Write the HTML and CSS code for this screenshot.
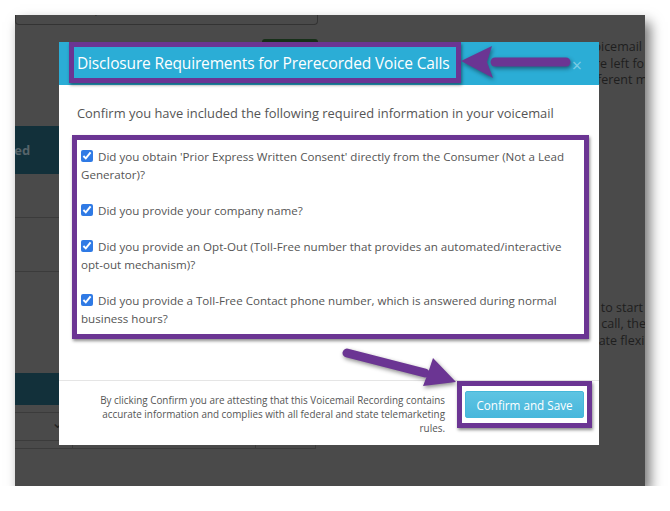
FILE: index.html
```html
<!DOCTYPE html>
<html lang="en">
<head>
<meta charset="utf-8">
<title>Disclosure Requirements</title>
<link rel="stylesheet" href="styles.css">
</head>
<body>
<div class="frame">
  <div class="page">
    <div class="left-col">
      <div class="top-input">Voicemail Drop</div>
      <div class="green-btn"></div>
      <div class="teal-bar"><span class="teal-text">Used</span></div>
      <div class="row row-a"></div>
      <div class="row row-b"></div>
      <div class="teal-bar teal-bar-2"></div>
      <div class="select-row"><span class="chev">&#8964;</span></div>
      <div class="grid-row"><span class="cell c1"></span><span class="cell c2"></span><span class="cell c3"></span></div>
    </div>
    <div class="right-col">
      <div class="para para-top">
        <span class="ln l1">Voicemail</span>
        <span class="ln l2">are left for</span>
        <span class="ln l3">different messages</span>
      </div>
      <div class="para para-bottom">
        <span class="ln l4">it to start</span>
        <span class="ln l5">a call, then</span>
        <span class="ln l6">date flexible</span>
      </div>
    </div>
  </div>

  <div class="modal">
    <div class="modal-header">
      <div class="title-box"><h4 class="modal-title">Disclosure Requirements for Prerecorded Voice Calls</h4></div>
      <span class="close">&times;</span>
    </div>
    <div class="modal-body">
      <p class="intro">Confirm you have included the following required information in your voicemail</p>
      <div class="checklist">
        <label class="item"><input type="checkbox" checked> Did you obtain 'Prior Express Written Consent' directly from the Consumer (Not a Lead Generator)?</label>
        <label class="item"><input type="checkbox" checked> Did you provide your company name?</label>
        <label class="item"><input type="checkbox" checked> Did you provide an Opt-Out (Toll-Free number that provides an automated/interactive opt-out mechanism)?</label>
        <label class="item"><input type="checkbox" checked> Did you provide a Toll-Free Contact phone number, which is answered during normal business hours?</label>
      </div>
    </div>
    <div class="modal-footer">
      <p class="attest">By clicking Confirm you are attesting that this Voicemail Recording contains accurate information and complies with all federal and state telemarketing rules.</p>
      <div class="btn-box"><button class="btn-confirm" type="button">Confirm and Save</button></div>
    </div>
  </div>

  <svg class="arrows" width="630" height="471" viewBox="0 0 630 471">
    <g class="arrow">
      <line x1="551" y1="47" x2="480" y2="47" stroke="#6b3593" stroke-width="9" stroke-linecap="round"/>
      <path d="M446 46 L477 31 L472 47 L478 63 Z" fill="#6b3593"/>
    </g>
    <g class="arrow">
      <line x1="332" y1="338" x2="410" y2="358" stroke="#6b3593" stroke-width="9" stroke-linecap="round"/>
      <path d="M441 367 L418 343 L413 358 L408 371 Z" fill="#6b3593"/>
    </g>
  </svg>
</div>
</body>
</html>
```

FILE: styles.css
```css
* { box-sizing: border-box; }

body {
  margin: 0;
  background: #ffffff;
  font-family: "Open Sans", "Liberation Sans", sans-serif;
}

.frame {
  position: relative;
  margin: 15px 0 0 15px;
  width: 630px;
  height: 471px;
  background: #4a4a4a;
  overflow: hidden;
  box-shadow: 5px 7px 12px rgba(0, 0, 0, 0.55);
}

/* dimmed page behind the dialog */
.page {
  display: grid;
  grid-template-columns: 303px 1fr 50px;
  height: 100%;
}

.left-col {
  grid-column: 1;
  display: flex;
  flex-direction: column;
}

.top-input {
  margin-top: -21px;
  height: 31px;
  border: 1px solid #333;
  border-top: none;
  border-radius: 0 0 4px 4px;
  color: #2a2a2a;
  font-size: 13px;
  line-height: 28px;
  text-indent: -6px;
  overflow: hidden;
  white-space: nowrap;
}

.green-btn {
  align-self: flex-end;
  margin-top: 14px;
  width: 56px;
  height: 30px;
  background: #173019;
  border-radius: 3px 3px 0 0;
}

.teal-bar {
  margin-top: 57px;
  height: 48px;
  background: #12303a;
  display: flex;
  align-items: center;
  overflow: hidden;
}

.teal-text {
  margin-left: -17px;
  color: #56646a;
  font-weight: 700;
  font-size: 13px;
}

.row {
  border-bottom: 1px solid #3b3b3b;
}
.row-a { height: 44px; }
.row-b { height: 54px; }

.teal-bar-2 {
  margin-top: 101px;
  height: 32px;
}

.select-row {
  margin-top: 7px;
  height: 29px;
  border-top: 1px solid #3b3b3b;
  border-bottom: 1px solid #3b3b3b;
  position: relative;
}
.chev {
  position: absolute;
  left: 36px;
  top: -2px;
  color: #222;
  font-size: 16px;
}

.grid-row {
  display: flex;
  height: 8px;
}
.cell { border-right: 1px solid #3b3b3b; border-bottom: 1px solid #3b3b3b; }
.c1 { width: 58px; }
.c2 { width: 183px; }
.c3 { width: 60px; }

.right-col {
  grid-column: 3;
  overflow: hidden;
  color: #1e1e1e;
  font-size: 12.5px;
  line-height: 16.5px;
}

.para { display: flex; flex-direction: column; white-space: nowrap; }
.para-top { margin-top: 24px; }
.para-bottom { margin-top: 211px; }
.ln { display: block; }
.l1 { margin-left: -9px; }
.l2 { margin-left: -7px; }
.l3 { margin-left: -13px; }
.l4 { margin-left: -5px; }
.l5 { margin-left: -4px; }
.l6 { margin-left: -4px; }

/* dialog */
.modal {
  position: absolute;
  left: 44px;
  top: 27px;
  width: 540px;
  height: 403px;
  background: #ffffff;
  display: flex;
  flex-direction: column;
  z-index: 2;
}

.modal-header {
  height: 43px;
  background: #2badd6;
  display: flex;
  align-items: flex-start;
  padding-left: 10px;
  position: relative;
}

.title-box {
  width: 392px;
  height: 41px;
  border: 5px solid #6b3593;
  box-shadow: 1px 2px 3px rgba(0, 0, 0, 0.45);
  display: flex;
  align-items: center;
  padding-left: 3px;
}

.modal-title {
  margin: 0;
  color: #ffffff;
  font-size: 15.5px;
  font-weight: 400;
  white-space: nowrap;
  letter-spacing: -0.15px;
}

.close {
  position: absolute;
  right: 17px;
  top: 12px;
  color: rgba(255, 255, 255, 0.4);
  font-size: 18px;
  line-height: 22px;
}

.modal-body {
  flex: 1;
  padding: 19px 10px 0 13px;
  color: #555555;
}

.intro {
  margin: 0 0 13px 5px;
  font-size: 12.9px;
  line-height: 18px;
}

.checklist {
  width: 517px;
  border: 5px solid #6b3593;
  box-shadow: 1px 2px 3px rgba(0, 0, 0, 0.45);
  padding: 8px 8px 6px 4px;
  display: flex;
  flex-direction: column;
  gap: 18px;
}

.item {
  display: block;
  font-size: 11.6px;
  line-height: 18px;
  color: #555555;
}

.item input {
  width: 12px;
  height: 12px;
  margin: 0 2px 0 0;
  vertical-align: -1px;
  accent-color: #2f7ae5;
}

.modal-footer {
  height: 65px;
  border-top: 1px solid #e5e5e5;
  display: flex;
  justify-content: flex-end;
  align-items: flex-start;
  padding-right: 7px;
  gap: 12px;
}

.attest {
  margin: 12px 0 0 0;
  width: 352px;
  text-align: right;
  font-size: 9.9px;
  line-height: 14px;
  color: #555555;
}

.btn-box {
  border: 5px solid #6b3593;
  box-shadow: 1px 2px 3px rgba(0, 0, 0, 0.45);
  padding: 5px 3px;
  background: #ffffff;
}

.btn-confirm {
  display: block;
  width: 119px;
  height: 27px;
  border: 1px solid #46b8da;
  border-radius: 2px;
  background: linear-gradient(#5fc4e2, #48b7dc);
  color: #ffffff;
  font-family: "Open Sans", "Liberation Sans", sans-serif;
  font-size: 11.7px;
  padding: 0;
}

.arrows {
  position: absolute;
  left: 0;
  top: 0;
  z-index: 3;
  pointer-events: none;
}

.arrow {
  filter: drop-shadow(1px 2px 2px rgba(0, 0, 0, 0.45));
}
```
